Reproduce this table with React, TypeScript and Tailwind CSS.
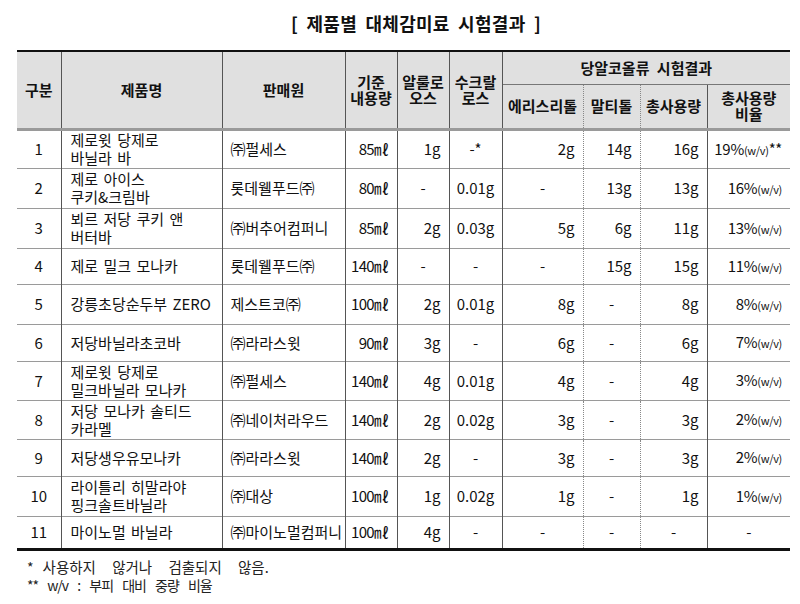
import React from 'react';

type Row = {
  no: string;
  name: string[];
  seller: string;
  vol: string;
  allulose: string;
  sucralose: string;
  erythritol: string;
  maltitol: string;
  total: string;
  ratio: string;
  note?: string;
  h: number;
};

const rows: Row[] = [
  { no: '1', name: ['제로윗 당제로', '바닐라 바'], seller: '㈜펄세스', vol: '85㎖', allulose: '1g', sucralose: '-*', erythritol: '2g', maltitol: '14g', total: '16g', ratio: '19%', note: '**', h: 39 },
  { no: '2', name: ['제로 아이스', '쿠키&크림바'], seller: '롯데웰푸드㈜', vol: '80㎖', allulose: '-', sucralose: '0.01g', erythritol: '-', maltitol: '13g', total: '13g', ratio: '16%', h: 40 },
  { no: '3', name: ['뵈르 저당 쿠키 앤', '버터바'], seller: '㈜버추어컴퍼니', vol: '85㎖', allulose: '2g', sucralose: '0.03g', erythritol: '5g', maltitol: '6g', total: '11g', ratio: '13%', h: 40 },
  { no: '4', name: ['제로 밀크 모나카'], seller: '롯데웰푸드㈜', vol: '140㎖', allulose: '-', sucralose: '-', erythritol: '-', maltitol: '15g', total: '15g', ratio: '11%', h: 36 },
  { no: '5', name: ['강릉초당순두부 ZERO'], seller: '제스트코㈜', vol: '100㎖', allulose: '2g', sucralose: '0.01g', erythritol: '8g', maltitol: '-', total: '8g', ratio: '8%', h: 40 },
  { no: '6', name: ['저당바닐라초코바'], seller: '㈜라라스윗', vol: '90㎖', allulose: '3g', sucralose: '-', erythritol: '6g', maltitol: '-', total: '6g', ratio: '7%', h: 37 },
  { no: '7', name: ['제로윗 당제로', '밀크바닐라 모나카'], seller: '㈜펄세스', vol: '140㎖', allulose: '4g', sucralose: '0.01g', erythritol: '4g', maltitol: '-', total: '4g', ratio: '3%', h: 39 },
  { no: '8', name: ['저당 모나카 솔티드', '카라멜'], seller: '㈜네이처라우드', vol: '140㎖', allulose: '2g', sucralose: '0.02g', erythritol: '3g', maltitol: '-', total: '3g', ratio: '2%', h: 39 },
  { no: '9', name: ['저당생우유모나카'], seller: '㈜라라스윗', vol: '140㎖', allulose: '2g', sucralose: '-', erythritol: '3g', maltitol: '-', total: '3g', ratio: '2%', h: 37 },
  { no: '10', name: ['라이틀리 히말라야', '핑크솔트바닐라'], seller: '㈜대상', vol: '100㎖', allulose: '1g', sucralose: '0.02g', erythritol: '1g', maltitol: '-', total: '1g', ratio: '1%', h: 40 },
  { no: '11', name: ['마이노멀 바닐라'], seller: '㈜마이노멀컴퍼니', vol: '100㎖', allulose: '4g', sucralose: '-', erythritol: '-', maltitol: '-', total: '-', ratio: '-', h: 33 },
];

// numbers sit right, a lone dash sits in the middle
const num = (v: string) => (v === '-' ? 'text-center' : 'text-right pr-[8px]');

export default function App() {
  return (
    <div
      className="w-[800px] h-[604px] bg-white text-[#111] pt-[11px]"
      style={{ fontFamily: '"Noto Sans CJK KR", "Noto Sans", sans-serif' }}
    >
      <h1 className="pl-[32px] text-center text-[18px] font-bold leading-[24px] tracking-[0.3px] [word-spacing:4px] text-[#111]">
        [ 제품별 대체감미료 시험결과 ]
      </h1>

      <table className="ml-[17px] mt-[15px] w-[773px] table-fixed border-collapse text-[15px] leading-[18px]">
        <colgroup>
          <col className="w-[44px]" />
          <col className="w-[161px]" />
          <col className="w-[123px]" />
          <col className="w-[52px]" />
          <col className="w-[52px]" />
          <col className="w-[53px]" />
          <col className="w-[81px]" />
          <col className="w-[57px]" />
          <col className="w-[67px]" />
          <col className="w-[83px]" />
        </colgroup>
        <thead className="bg-[#e0e0e0] font-bold text-[15px] leading-[16px]">
          <tr className="h-[33px] border-t-[2px] border-[#111]">
            <th rowSpan={2} className="border-r border-[#555]">구분</th>
            <th rowSpan={2} className="border-r border-[#555]">제품명</th>
            <th rowSpan={2} className="border-r border-[#555]">판매원</th>
            <th rowSpan={2} className="border-r border-[#555]">기준<br />내용량</th>
            <th rowSpan={2} className="border-r border-[#555]">알룰로<br />오스</th>
            <th rowSpan={2} className="border-r border-[#555]">수크랄<br />로스</th>
            <th colSpan={4} className="border-b border-[#777] [word-spacing:4px]">당알코올류 시험결과</th>
          </tr>
          <tr className="h-[45px]">
            <th className="border-r border-dotted border-[#888]">에리스리톨</th>
            <th className="border-r border-dotted border-[#888]">말티톨</th>
            <th className="border-r border-[#555]">총사용량</th>
            <th>총사용량<br />비율</th>
          </tr>
        </thead>
        <tbody className="border-t-[3px] border-t-[#9a9a9a] border-b-[3px] border-b-[#111]">
          {rows.map((r) => (
            <tr key={r.no} className="border-b border-[#9a9a9a]" style={{ height: r.h }}>
              <td className="border-r border-[#555] text-center">{r.no}</td>
              <td className="border-r border-[#555] pl-[9px] leading-[18px] [word-spacing:2px]">
                {r.name.map((l) => (
                  <div key={l}>{l}</div>
                ))}
              </td>
              <td className="border-r border-[#555] pl-[8px] whitespace-nowrap">{r.seller}</td>
              <td className="border-r border-[#555] text-right pr-[8px] tracking-[-0.6px]">{r.vol}</td>
              <td className={`border-r border-[#555] ${num(r.allulose)}`}>{r.allulose}</td>
              <td className="border-r border-[#555] text-center">{r.sucralose}</td>
              <td className={`border-r border-dotted border-[#888] ${num(r.erythritol)}`}>{r.erythritol}</td>
              <td className={`border-r border-dotted border-[#888] ${num(r.maltitol)}`}>{r.maltitol}</td>
              <td className={`border-r border-[#555] ${num(r.total)}`}>{r.total}</td>
              <td className={`${num(r.ratio)} whitespace-nowrap tracking-[-0.3px]`}>
                {r.ratio === '-' ? (
                  '-'
                ) : (
                  <>
                    {r.ratio}
                    <span className="text-[11px]">(w/v)</span>
                    {r.note}
                  </>
                )}
              </td>
            </tr>
          ))}
        </tbody>
      </table>

      <div className="ml-[27px] mt-[7px] text-[14px] leading-[18px] text-[#222]">
        <p>
          *<span className="ml-[9px] text-[14.5px] [word-spacing:13px]">사용하지 않거나 검출되지 않음.</span>
        </p>
        <p className="tracking-[-1px] [word-spacing:7px]">** w/v : 부피 대비 중량 비율</p>
      </div>
    </div>
  );
}
